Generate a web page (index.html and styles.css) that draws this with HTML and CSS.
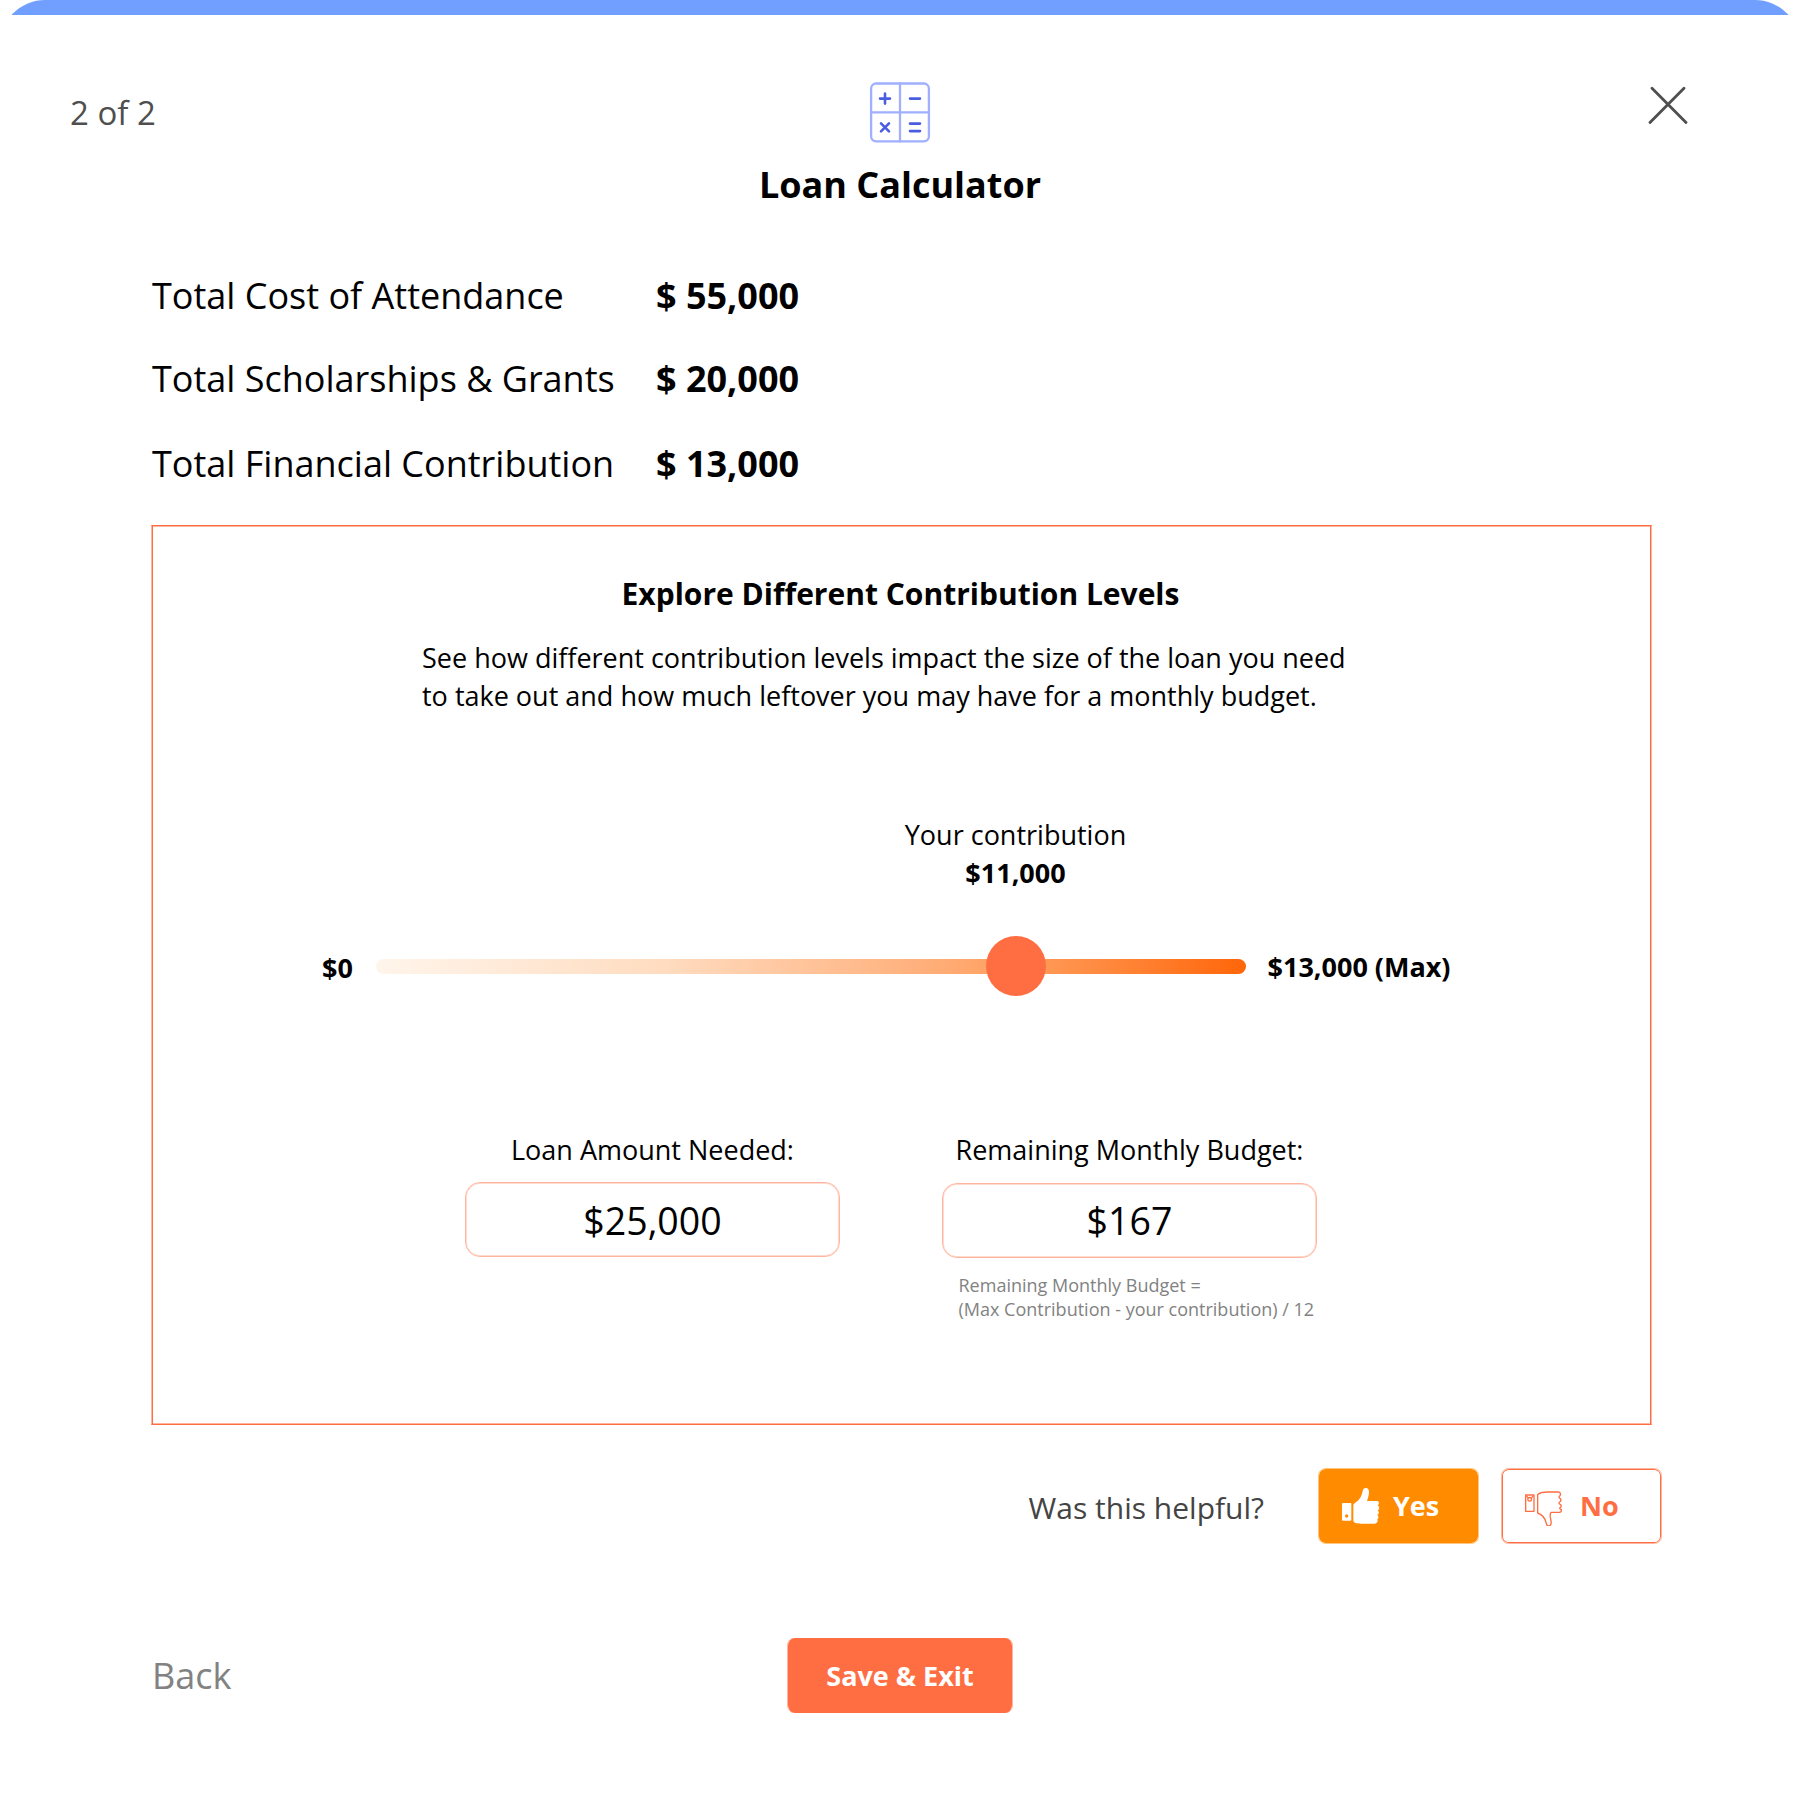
FILE: index.html
```html
<!DOCTYPE html>
<html lang="en">
<head>
<meta charset="utf-8">
<title>Loan Calculator</title>
<link rel="stylesheet" href="styles.css">
</head>
<body>
<main class="modal">
  <div class="topbar"><div class="topbar-fill"></div></div>

  <header class="header">
    <span class="step">2 of 2</span>
    <div class="brand">
      <svg class="calc-icon" viewBox="0 -0.400 60 60" fill="none" stroke-linecap="round">
        <g stroke="#a0b0ff" stroke-width="2.300">
          <rect x="1.100" y="1.100" width="57.800" height="57.800" rx="5"/>
          <path d="M30 1v58M1 30h58"/>
        </g>
        <path stroke="#4a5de0" stroke-width="2.600" d="M10 16.200h10M15 11.200v10M40 16.200h10M11 41l8 8M19 41l-8 8M40 41.200h10M40 48.700h10"/>
      </svg>
      <h1 class="title">Loan Calculator</h1>
    </div>
    <svg class="close-icon" viewBox="0 0 40 38" fill="none" stroke="#4f4f4f" stroke-width="2.800" stroke-linecap="round">
      <path d="M4 2.300L38 36.500M36 2.300L2 36.500"/>
    </svg>
  </header>

  <dl class="totals">
    <dt>Total Cost of Attendance</dt><dd>$ 55,000</dd>
    <dt>Total Scholarships &amp; Grants</dt><dd>$ 20,000</dd>
    <dt>Total Financial Contribution</dt><dd>$ 13,000</dd>
  </dl>

  <section class="panel">
    <h2 class="panel-title">Explore Different Contribution Levels</h2>
    <p class="panel-text">See how different contribution levels impact the size of the loan you need<br>to take out and how much leftover you may have for a monthly budget.</p>

    <div class="slider">
      <span class="min">$0</span>
      <div class="track">
        <div class="current">Your contribution<br><b>$11,000</b></div>
        <div class="knob"></div>
      </div>
      <span class="max">$13,000 (Max)</span>
    </div>

    <div class="results">
      <div class="result">
        <div class="label">Loan Amount Needed:</div>
        <div class="value">$25,000</div>
      </div>
      <div class="result result-budget">
        <div class="label">Remaining Monthly Budget:</div>
        <div class="value">$167</div>
        <p class="note">Remaining Monthly Budget =<br>(Max Contribution - your contribution) / 12</p>
      </div>
    </div>
  </section>

  <div class="feedback">
    <span class="question">Was this helpful?</span>
    <button class="btn yes">
      <svg class="thumb" viewBox="120 228 120 120" fill="#fff">
        <path fill-rule="evenodd" d="M128 279H152Q154 279 154 281V329Q154 332 151 332H128Q126 332 126 329V281Q126 279 128 279ZM140 313A5 5 0 1 0 140 323A5 5 0 1 0 140 313Z"/>
        <path d="M160 286C160 283 162 281 165 279C178 270 185 260 188 243C189 237 192 234 197 234C204 234 207 239 207 246C207 255 204 264 201 273H232C238 273 238 283 233 286C239 290 239 299 233 301C238 305 238 313 232 315C237 319 236 326 232 328C235 335 231 340 225 341H188C175 341 160 339 160 332Z"/>
      </svg>
      Yes
    </button>
    <button class="btn no">
      <svg class="thumb" viewBox="669 228 120 120" fill="none" stroke="#ff6e42" stroke-width="4" stroke-linejoin="round">
        <rect x="677" y="255" width="25" height="49"/>
        <circle cx="689" cy="268" r="5.500"/>
        <path d="M679 258l6 5M700 258l-6 5"/>
        <path d="M713 254C718 249 731 246 743 246H775C781 246 783 252 780 257C776 260 776 264 781 266C784 271 783 274 779 276C775 279 777 282 782 284C785 289 784 291 780 293C778 296 781 297 784 299C785 304 783 307 778 307H753C750 311 750 319 752 327C755 339 753 348 746 348C741 348 740 345 739 340C736 325 727 314 713 309Z"/>
      </svg>
      No
    </button>
  </div>

  <footer class="footer">
    <a class="back">Back</a>
    <button class="btn save">Save &amp; Exit</button>
  </footer>
</main>
</body>
</html>
```
FILE: styles.css
```css
* { box-sizing: border-box; }
body, h1, h2, p, dl, dd { margin: 0; }
body {
  background: #fff;
  color: #000;
  font-family: "Open Sans", sans-serif;
}
.modal { width: 1800px; height: 1801px; overflow: hidden; }

.topbar { height: 15px; overflow: hidden; }
.topbar-fill { height: 90px; border-radius: 45px; background: #709fff; }

.header {
  display: grid;
  grid-template-columns: 1fr auto 1fr;
  align-items: start;
  height: 255px;
  padding: 67px 112px 0 70px;
}
.step { margin-top: 8px; font-size: 33px; line-height: 46px; color: #4f4f4f; }
.brand { display: flex; flex-direction: column; align-items: center; margin-left: 42px; }
.calc-icon { width: 60px; height: 60px; overflow: visible; }
.title { margin-top: 18px; font-size: 36px; line-height: 50px; font-weight: 700; }
.close-icon { width: 40px; height: 38px; margin-top: 4px; justify-self: end; }

.totals {
  display: grid;
  grid-template-columns: 504px auto;
  grid-template-rows: 83px 85px 86px;
  padding: 1px 0 0 152px;
  font-size: 36px;
  line-height: 50px;
}
.totals dd { font-weight: 700; }

.panel {
  width: 1501px;
  height: 900px;
  margin-left: 151px;
  border: 1px solid #ff6e42;
  border-left-color: #ffb6a0;
  border-right-color: #ffb6a0;
  box-shadow: inset 1px 0 #ff6e42, inset -1px 0 #ff6e42, inset 0 1px #ffb6a0, inset 0 -1px #ffb6a0;
}
.panel-title { margin: 47px 2px 0 0; text-align: center; font-size: 30px; line-height: 41px; }
.panel-text { margin: 25px 0 0 270px; font-size: 27px; line-height: 37.5px; white-space: nowrap; }

.slider {
  display: grid;
  grid-template-columns: 54px 870px auto;
  align-items: center;
  height: 37px;
  margin: 233px 0 0 170px;
  font-size: 27px;
  font-weight: 700;
}
.min { padding-top: 2px; }
.track {
  position: relative;
  height: 15px;
  border-radius: 7.5px;
  background: linear-gradient(90deg, #fff5eb 0%, #ffdcc0 33%, #ffb482 60%, #ff9c5b 75%, #ff6609 100%);
}
.knob {
  position: absolute;
  left: 609.5px;
  top: -23px;
  width: 60px;
  height: 60px;
  border-radius: 50%;
  background: #ff6e42;
}
.current {
  position: absolute;
  left: 509.5px;
  top: -143px;
  width: 260px;
  text-align: center;
  font-weight: 400;
  line-height: 37.5px;
}
.max { padding-left: 21.5px; }

.results { display: flex; gap: 102px; margin: 147px 0 0 313px; }
.result { width: 375px; }
.label { text-align: center; font-size: 27px; line-height: 38px; white-space: nowrap; }
.value {
  height: 75px;
  margin-top: 13px;
  border: 1px solid #ffb6a0;
  border-radius: 15px;
  box-shadow: inset 0 0 0 1px #ffdacf;
  text-align: center;
  font-size: 37.5px;
  line-height: 75px;
}
.result-budget .value { margin-top: 14px; line-height: 73px; }
.note { margin: 15px 0 0 16.5px; font-size: 18px; line-height: 24px; color: #828282; white-space: nowrap; }

.feedback { display: flex; align-items: center; justify-content: flex-end; margin: 43px 138px 0 0; }
.question { margin-right: 54px; padding-top: 3px; font-size: 30px; line-height: 41px; color: #444; }
.btn {
  display: flex;
  align-items: center;
  height: 75px;
  border: 0;
  border-radius: 7.5px;
  font: 700 27px/38px "Open Sans", sans-serif;
}
.yes { width: 161px; height: 76px; gap: 13px; padding: 0 0 0 21px; border: 1px solid #ffc580; background: #ff8c00 padding-box; color: #fff; }
.no { width: 161px; height: 76px; gap: 17px; margin-left: 22px; padding: 0 0 0 21px; border: 1px solid #ffb6a0; box-shadow: inset 0 0 0 1px #ff6e42; background: #fff; color: #ff6e42; }
.thumb { width: 40px; height: 40px; flex: none; }

.footer {
  display: grid;
  grid-template-columns: 1fr auto 1fr;
  align-items: center;
  margin-top: 94px;
  padding: 0 150px;
}
.back { padding-left: 2px; font-size: 36px; line-height: 50px; color: #828282; }
.save { width: 226px; justify-content: center; padding: 0; border: solid #ffb6a0; border-width: 0 1px; background: #ff6e42 padding-box; color: #fff; }
```
